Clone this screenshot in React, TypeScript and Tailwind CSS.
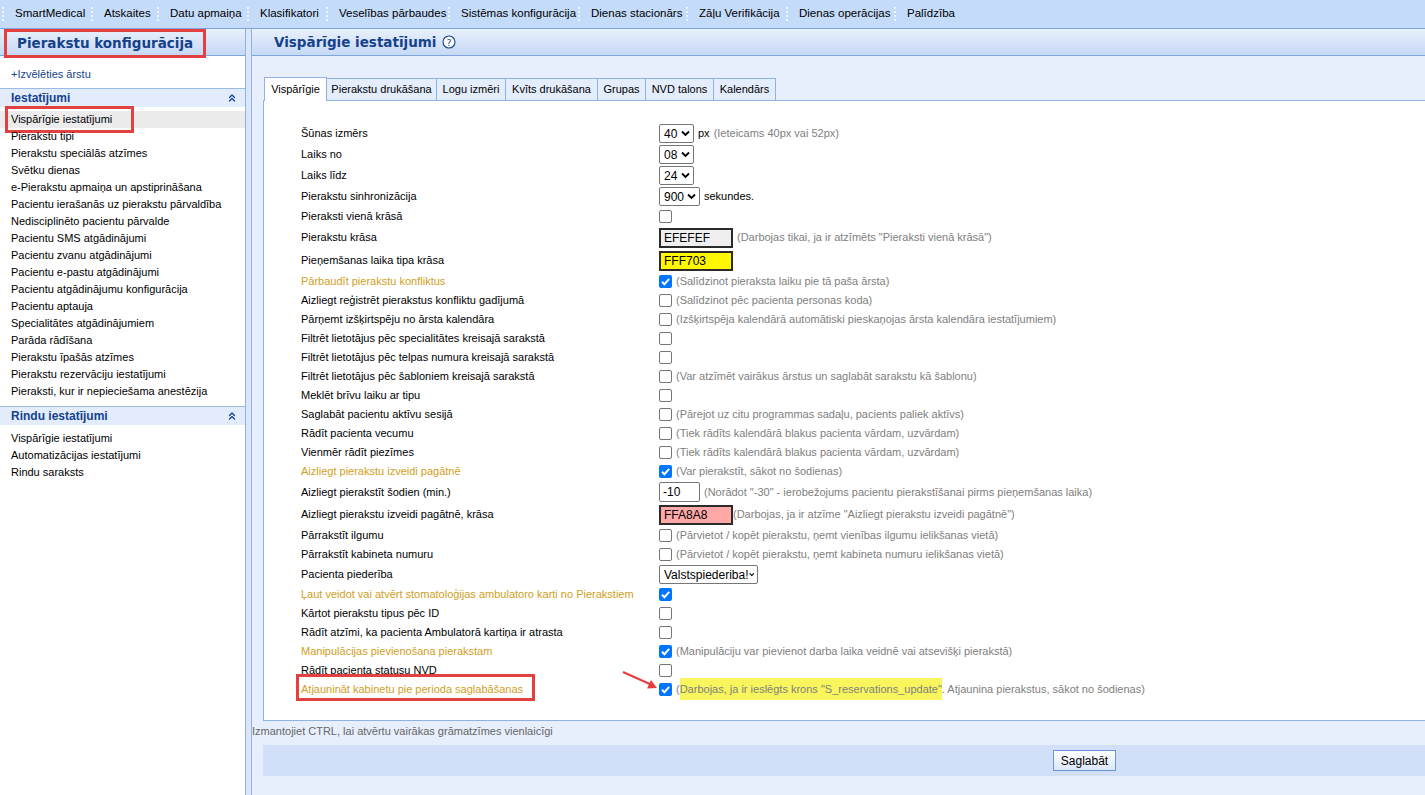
import React from 'react';
import { ChevronsUp } from 'lucide-react';

const menu: [string, number][] = [
  ['SmartMedical', 87],
  ['Atskaites', 64],
  ['Datu apmaiņa', 88],
  ['Klasifikatori', 77],
  ['Veselības pārbaudes', 120],
  ['Sistēmas konfigurācija', 128],
  ['Dienas stacionārs', 106],
  ['Zāļu Verifikācija', 98],
  ['Dienas operācijas', 106],
  ['Palīdzība', 80],
];

const settingsItems = [
  'Vispārīgie iestatījumi',
  'Pierakstu tipi',
  'Pierakstu speciālās atzīmes',
  'Svētku dienas',
  'e-Pierakstu apmaiņa un apstiprināšana',
  'Pacientu ierašanās uz pierakstu pārvaldība',
  'Nedisciplinēto pacientu pārvalde',
  'Pacientu SMS atgādinājumi',
  'Pacientu zvanu atgādinājumi',
  'Pacientu e-pastu atgādinājumi',
  'Pacientu atgādinājumu konfigurācija',
  'Pacientu aptauja',
  'Specialitātes atgādinājumiem',
  'Parāda rādīšana',
  'Pierakstu īpašās atzīmes',
  'Pierakstu rezervāciju iestatījumi',
  'Pieraksti, kur ir nepieciešama anestēzija',
];

const queueItems = ['Vispārīgie iestatījumi', 'Automatizācijas iestatījumi', 'Rindu saraksts'];

const tabs: [string, number][] = [
  ['Vispārīgie', 63],
  ['Pierakstu drukāšana', 111],
  ['Logu izmēri', 70],
  ['Kvīts drukāšana', 93],
  ['Grupas', 49],
  ['NVD talons', 69],
  ['Kalendārs', 63],
];

const Sep = () => (
  <div className="flex flex-col gap-[2px] w-[2px] items-center">
    <span className="w-[2px] h-[2px] bg-[#eef5ff]" />
    <span className="w-[2px] h-[2px] bg-[#eef5ff]" />
    <span className="w-[2px] h-[2px] bg-[#eef5ff]" />
    <span className="w-[2px] h-[2px] bg-[#eef5ff]" />
  </div>
);

const Check = ({ on }: { on?: boolean }) =>
  on ? (
    <span className="inline-flex w-[13px] h-[13px] rounded-[2px] bg-[#0075ff] items-center justify-center shrink-0">
      <svg width="11" height="11" viewBox="0 0 11 11">
        <path d="M2 5.8 L4.4 8.2 L9.2 2.8" stroke="white" strokeWidth="2" fill="none" />
      </svg>
    </span>
  ) : (
    <span className="inline-block w-[13px] h-[13px] rounded-[2px] border border-[#767676] bg-white shrink-0" />
  );

const Select = ({ value, w }: { value: string; w: number }) => (
  <span
    className="inline-flex items-center justify-between h-[19px] border border-[#767676] rounded-[2px] bg-white pl-[4px] pr-[3px] text-[12px] text-black shrink-0"
    style={{ width: w }}
  >
    <span>{value}</span>
    <svg width="9" height="7" viewBox="0 0 9 7">
      <path d="M1 1.5 L4.5 5 L8 1.5" stroke="black" strokeWidth="1.8" fill="none" />
    </svg>
  </span>
);

const ColorBox = ({ value, bg }: { value: string; bg: string }) => (
  <span
    className="inline-flex items-center w-[74px] h-[20px] border-2 border-[#2b2b2b] pl-[3px] text-[12px] text-black shrink-0"
    style={{ backgroundColor: bg }}
  >
    {value}
  </span>
);

const Note = ({ children }: { children: React.ReactNode }) => (
  <span className="text-[#808080] ml-[4px] whitespace-nowrap">{children}</span>
);

type Row = { label: string; gold?: boolean; h: number; control: React.ReactNode };

const rows: Row[] = [
  { label: 'Šūnas izmērs', h: 21, control: <><Select value="40" w={35} /><span className="ml-[4px] text-black">px</span><Note>(Ieteicams 40px vai 52px)</Note></> },
  { label: 'Laiks no', h: 21, control: <Select value="08" w={35} /> },
  { label: 'Laiks līdz', h: 21, control: <Select value="24" w={35} /> },
  { label: 'Pierakstu sinhronizācija', h: 21, control: <><Select value="900" w={41} /><span className="ml-[4px] text-black">sekundes.</span></> },
  { label: 'Pieraksti vienā krāsā', h: 19, control: <Check /> },
  { label: 'Pierakstu krāsa', h: 23, control: <><ColorBox value="EFEFEF" bg="#efefef" /><Note>(Darbojas tikai, ja ir atzīmēts "Pieraksti vienā krāsā")</Note></> },
  { label: 'Pieņemšanas laika tipa krāsa', h: 23, control: <ColorBox value="FFF703" bg="#fff703" /> },
  { label: 'Pārbaudīt pierakstu konfliktus', gold: true, h: 19, control: <><Check on /><Note>(Salīdzinot pieraksta laiku pie tā paša ārsta)</Note></> },
  { label: 'Aizliegt reģistrēt pierakstus konfliktu gadījumā', h: 19, control: <><Check /><Note>(Salīdzinot pēc pacienta personas koda)</Note></> },
  { label: 'Pārņemt izšķirtspēju no ārsta kalendāra', h: 19, control: <><Check /><Note>(Izšķirtspēja kalendārā automātiski pieskaņojas ārsta kalendāra iestatījumiem)</Note></> },
  { label: 'Filtrēt lietotājus pēc specialitātes kreisajā sarakstā', h: 19, control: <Check /> },
  { label: 'Filtrēt lietotājus pēc telpas numura kreisajā sarakstā', h: 19, control: <Check /> },
  { label: 'Filtrēt lietotājus pēc šabloniem kreisajā sarakstā', h: 19, control: <><Check /><Note>(Var atzīmēt vairākus ārstus un saglabāt sarakstu kā šablonu)</Note></> },
  { label: 'Meklēt brīvu laiku ar tipu', h: 19, control: <Check /> },
  { label: 'Saglabāt pacientu aktīvu sesijā', h: 19, control: <><Check /><Note>(Pārejot uz citu programmas sadaļu, pacients paliek aktīvs)</Note></> },
  { label: 'Rādīt pacienta vecumu', h: 19, control: <><Check /><Note>(Tiek rādīts kalendārā blakus pacienta vārdam, uzvārdam)</Note></> },
  { label: 'Vienmēr rādīt piezīmes', h: 19, control: <><Check /><Note>(Tiek rādīts kalendārā blakus pacienta vārdam, uzvārdam)</Note></> },
  { label: 'Aizliegt pierakstu izveidi pagātnē', gold: true, h: 19, control: <><Check on /><Note>(Var pierakstīt, sākot no šodienas)</Note></> },
  {
    label: 'Aizliegt pierakstīt šodien (min.)',
    h: 22,
    control: (
      <>
        <span className="inline-flex items-center w-[41px] h-[20px] border border-[#767676] rounded-[2px] bg-white pl-[3px] text-[12px] text-black">-10</span>
        <Note>(Norādot "-30" - ierobežojums pacientu pierakstīšanai pirms pieņemšanas laika)</Note>
      </>
    ),
  },
  { label: 'Aizliegt pierakstu izveidi pagātnē, krāsa', h: 23, control: <><ColorBox value="FFA8A8" bg="#ffa8a8" /><span className="text-[#808080] whitespace-nowrap">(Darbojas, ja ir atzīme "Aizliegt pierakstu izveidi pagātnē")</span></> },
  { label: 'Pārrakstīt ilgumu', h: 19, control: <><Check /><Note>(Pārvietot / kopēt pierakstu, ņemt vienības ilgumu ielikšanas vietā)</Note></> },
  { label: 'Pārrakstīt kabineta numuru', h: 19, control: <><Check /><Note>(Pārvietot / kopēt pierakstu, ņemt kabineta numuru ielikšanas vietā)</Note></> },
  { label: 'Pacienta piederība', h: 21, control: <Select value="Valstspiederiba!" w={99} /> },
  { label: 'Ļaut veidot vai atvērt stomatoloģijas ambulatoro karti no Pierakstiem', gold: true, h: 19, control: <Check on /> },
  { label: 'Kārtot pierakstu tipus pēc ID', h: 19, control: <Check /> },
  { label: 'Rādīt atzīmi, ka pacienta Ambulatorā kartiņa ir atrasta', h: 19, control: <Check /> },
  { label: 'Manipulācijas pievienošana pierakstam', gold: true, h: 19, control: <><Check on /><Note>(Manipulāciju var pievienot darba laika veidnē vai atsevišķi pierakstā)</Note></> },
  { label: 'Rādīt pacienta statusu NVD', h: 19, control: <Check /> },
];

const App = () => {
  return (
    <div className="w-[1425px] h-[795px] overflow-hidden flex flex-col bg-[#e7effd] font-['Liberation_Sans',Arial,sans-serif] text-[11px] text-black">
      {/* top menu */}
      <div className="h-[29px] shrink-0 flex items-center pl-[2px] bg-[#c4dbfa] border-b border-[#7fa5dc]">
        {menu.map(([name, w]) => (
          <React.Fragment key={name}>
            <Sep />
            <div className="pl-[11px] text-[11.5px] whitespace-nowrap" style={{ width: w }}>{name}</div>
          </React.Fragment>
        ))}
      </div>

      <div className="flex flex-1 min-h-0">
        {/* sidebar */}
        <div className="w-[245px] shrink-0 bg-white flex flex-col">
          <div className="h-[27px] shrink-0 flex items-center pl-[4px] bg-gradient-to-b from-[#e8f0fc] to-[#c6d9f5] border-b border-[#7fa5dc]">
            <div className="border-[3px] border-[#e2413f] h-[29px] w-[202px] mt-[2px] flex items-center pl-[10px]">
              <span className="font-['DejaVu_Sans',Verdana,sans-serif] font-bold text-[13.5px] text-[#15428b] whitespace-nowrap">Pierakstu konfigurācija</span>
            </div>
          </div>
          <div className="h-[32px] flex items-center pl-[11px] text-[#15428b] pt-[4px]">+Izvēlēties ārstu</div>
          <div className="h-[19px] flex items-center justify-between pl-[11px] pr-[7px] bg-[#e3ecfb] border-t border-[#99bbe8]">
            <span className="font-bold text-[12px] text-[#15428b]">Iestatījumi</span>
            <ChevronsUp size={12} strokeWidth={2.5} color="#15428b" />
          </div>
          <div className="pt-[4px] pb-[6px]">
            {settingsItems.map((it, i) => (
              <div key={it} className={`relative h-[17px] flex items-center pl-[11px] whitespace-nowrap ${i === 0 ? 'bg-[#ececec]' : ''}`}>
                {it}
                {i === 0 && <span className="absolute left-[5px] top-[-5px] w-[129px] h-[27px] border-[3px] border-[#e2413f]" />}
              </div>
            ))}
          </div>
          <div className="h-[19px] flex items-center justify-between pl-[11px] pr-[7px] bg-[#e3ecfb] border-t border-[#99bbe8]">
            <span className="font-bold text-[12px] text-[#15428b]">Rindu iestatījumi</span>
            <ChevronsUp size={12} strokeWidth={2.5} color="#15428b" />
          </div>
          <div className="pt-[5px]">
            {queueItems.map((it) => (
              <div key={it} className="h-[17px] flex items-center pl-[11px]">{it}</div>
            ))}
          </div>
        </div>

        {/* splitter */}
        <div className="w-[7px] shrink-0 bg-[#dbe7f8] border-x border-[#8fb2e3]" />

        {/* main */}
        <div className="flex-1 min-w-0 flex flex-col">
          <div className="h-[27px] shrink-0 flex items-center pl-[22px] gap-[6px] bg-gradient-to-b from-[#e8f0fc] to-[#c6d9f5] border-b border-[#7fa5dc]">
            <span className="font-['DejaVu_Sans',Verdana,sans-serif] font-bold text-[13.5px] text-[#15428b] whitespace-nowrap">Vispārīgie iestatījumi</span>
            <svg width="14" height="14" viewBox="0 0 14 14">
              <circle cx="7" cy="7" r="6" stroke="#15428b" strokeWidth="1.1" fill="white" />
              <text x="7" y="10.5" textAnchor="middle" fontSize="9.5" fontFamily="DejaVu Sans" fill="#15428b">?</text>
            </svg>
          </div>

          <div className="pl-[11px] pt-[21px]">
            {/* tabs */}
            <div className="flex items-end h-[23px] pl-[1px]">
              {tabs.map(([t, w], i) => (
                <div
                  key={t}
                  className={`flex items-center justify-center border border-[#8db2e3] -ml-[1px] first:ml-0 whitespace-nowrap ${
                    i === 0 ? 'h-[24px] bg-white border-b-0 relative z-10 mb-[-1px]' : 'h-[22px] bg-[#e4edfc] border-b-0'
                  }`}
                  style={{ width: w }}
                >
                  {t}
                </div>
              ))}
            </div>

            {/* panel */}
            <div className="relative bg-white border border-r-0 border-[#8db2e3] pl-[37px] pt-[22px] pb-[21px]">
              {rows.map((r) => (
                <div key={r.label} className="flex items-center" style={{ height: r.h }}>
                  <div className={`w-[358px] shrink-0 whitespace-nowrap ${r.gold ? 'text-[#cfa024]' : ''}`}>{r.label}</div>
                  <div className="flex items-center">{r.control}</div>
                </div>
              ))}
              <div className="flex items-center h-[19px]">
                <div className="w-[358px] shrink-0 relative">
                  <span className="absolute left-[-5px] top-[-7px] w-[239px] h-[27px] border-[3px] border-[#e2413f]" />
                  <span className="text-[#cfa024] whitespace-nowrap">Atjaunināt kabinetu pie perioda saglabāšanas</span>
                </div>
                <div className="flex items-center">
                  <Check on />
                  <span className="text-[#808080] ml-[4px] whitespace-nowrap">
                    (<span className="bg-[#f8f65c] py-[5px]">Darbojas, ja ir ieslēgts krons "S_reservations_update"</span>. Atjaunina pierakstus, sākot no šodienas)
                  </span>
                </div>
              </div>
              <svg className="absolute left-[358px] top-[570px]" width="40" height="22" viewBox="0 0 40 22">
                <path d="M1 1 L30 14" stroke="#e2413f" strokeWidth="2.2" />
                <path d="M35 17 L25 17.5 L29 9 Z" fill="#e2413f" />
              </svg>
            </div>

            <div className="h-[24px] flex items-start pt-[2px] -ml-[11px] text-[#666]">Izmantojiet CTRL, lai atvērtu vairākas grāmatzīmes vienlaicīgi</div>
            <div className="h-[31px] bg-[#d1e0f8] flex items-center pl-[790px]">
              <button className="w-[63px] h-[21px] border border-[#6d94d6] bg-gradient-to-b from-white to-[#dbe7fa] text-[12px] text-black">Saglabāt</button>
            </div>
          </div>
        </div>
      </div>
    </div>
  );
};

export default App;
